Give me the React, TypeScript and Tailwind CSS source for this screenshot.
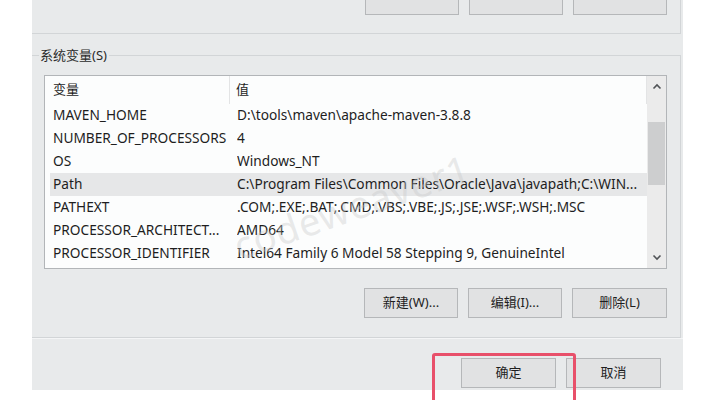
import React from "react";

const names = [
  ["MAVEN_HOME", "D:\\tools\\maven\\apache-maven-3.8.8"],
  ["NUMBER_OF_PROCESSORS", "4"],
  ["OS", "Windows_NT"],
  ["Path", "C:\\Program Files\\Common Files\\Oracle\\Java\\javapath;C:\\WIN..."],
  ["PATHEXT", ".COM;.EXE;.BAT;.CMD;.VBS;.VBE;.JS;.JSE;.WSF;.WSH;.MSC"],
  ["PROCESSOR_ARCHITECT...", "AMD64"],
  ["PROCESSOR_IDENTIFIER", "Intel64 Family 6 Model 58 Stepping 9, GenuineIntel"],
];

function Btn({ label, w = "w-[94px]" }: { label: string; w?: string }) {
  return (
    <div
      className={`${w} h-[30px] shrink-0 flex items-center justify-center bg-[#e1e2e3] border border-[#b5b7b9] text-[13px] text-[#1e1e1e]`}
    >
      {label}
    </div>
  );
}

function Chevron({ up }: { up: boolean }) {
  return (
    <svg width="10" height="7" viewBox="0 0 10 7">
      <polyline
        points={up ? "1.5,5.5 5,2 8.5,5.5" : "1.5,1.5 5,5 8.5,1.5"}
        fill="none"
        stroke="#505356"
        strokeWidth="1.6"
      />
    </svg>
  );
}

export default function App() {
  return (
    <div className="relative w-[714px] h-[400px] overflow-hidden bg-white font-['Noto_Sans','Noto_Sans_CJK_SC',sans-serif] text-[#1e1e1e]">
      <div className="ml-[32px] w-[651px] h-[390px] bg-[#e8eaeb] flex flex-col">
        {/* user variables group (clipped) */}
        <div className="h-[34px] w-[649px] border-r border-b border-[#d2d5d7] flex items-end justify-end gap-[10px] pr-[13px] pb-[18px] overflow-hidden">
          <Btn label="" />
          <Btn label="" />
          <Btn label="" />
        </div>

        {/* system variables group */}
        <div className="w-[649px] mt-[12px] flex flex-col">
          <div className="h-[18px] flex">
            <div className="w-[7px] h-[9px] self-end border-t border-[#d2d5d7]" />
            <span className="ml-[1px] mr-[2px] text-[13px] leading-[18px] text-[#2a2a2a]">
              系统变量(S)
            </span>
            <div className="flex-1 h-[9px] self-end border-t border-r border-[#d2d5d7]" />
          </div>
          <div className="h-[274px] border-r border-b border-[#d2d5d7] pl-[12px] pr-[13px] pt-[11px] flex flex-col">
            <div className="h-[194px] border border-[#b2b5b8] bg-[#fcfdfd] flex">
              <div className="flex-1 flex flex-col text-[13.7px]">
                <div className="h-[28px] flex items-center shrink-0">
                  <div className="w-[185px] h-full border-r border-[#e3e4e5] pl-[8px] flex items-center text-[13px]">
                    变量
                  </div>
                  <div className="flex-1 h-full border-r border-[#e3e4e5] pl-[6px] flex items-center text-[13px]">
                    值
                  </div>
                </div>
                {names.map(([n, v]) => (
                  <div
                    key={n}
                    className={`ml-[5px] h-[23px] flex items-center whitespace-nowrap ${
                      n === "Path" ? "bg-[#e6e7e8]" : ""
                    }`}
                  >
                    <div className="w-[187px] pl-[3px] shrink-0">{n}</div>
                    <div className="flex-1 overflow-hidden">{v}</div>
                  </div>
                ))}
              </div>
              <div className="w-[19px] bg-[#ebebeb] flex flex-col">
                <div className="h-[21px] flex items-center justify-center">
                  <Chevron up />
                </div>
                <div className="flex-1 pt-[25px] px-[1px]">
                  <div className="h-[63px] bg-[#cdcecf]" />
                </div>
                <div className="h-[21px] flex items-center justify-center">
                  <Chevron up={false} />
                </div>
              </div>
            </div>
            <div className="mt-[19px] flex justify-end gap-[10px]">
              <Btn label="新建(W)..." />
              <Btn label="编辑(I)..." />
              <Btn label="删除(L)" w="w-[95px]" />
            </div>
          </div>
        </div>

        {/* bottom buttons */}
        <div className="flex-1 border-t border-[#f4f5f6] flex justify-end items-start gap-[10px] pr-[22px] pt-[19px]">
          <Btn label="确定" w="w-[95px]" />
          <Btn label="取消" w="w-[95px]" />
        </div>
      </div>

      {/* watermark */}
      <div className="absolute left-[228px] top-[178px] -rotate-[19deg] text-[38px] text-[#c8c9ca]/40 tracking-[1px] pointer-events-none">
        codeweaver1
      </div>

      {/* red highlight frame */}
      <div className="absolute left-[432px] top-[353px] w-[144px] h-[60px] border-[3px] border-[#e8506a] rounded-[3px]" />
    </div>
  );
}
